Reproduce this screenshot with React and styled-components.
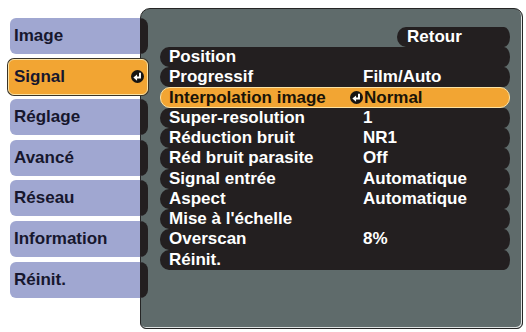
import React from "react";
import styled, { createGlobalStyle } from "styled-components";

const Global = createGlobalStyle`
  html, body { margin: 0; padding: 0; background: #ffffff; }
  body { font-family: "Liberation Sans", Arial, sans-serif; }
`;

const Screen = styled.div`
  width: 526px;
  height: 332px;
  display: flex;
  align-items: flex-start;
  padding-top: 8px;
  box-sizing: border-box;
  overflow: hidden;
`;

const Sidebar = styled.nav`
  position: relative;
  z-index: 1;
  margin-left: 10px;
  margin-right: -8px;
  margin-top: 10px;
  width: 138px;
  display: flex;
  flex-direction: column;
  gap: 4.6px;
`;

const Tab = styled.div`
  height: 36px;
  box-sizing: border-box;
  display: flex;
  align-items: center;
  justify-content: space-between;
  padding-left: 4px;
  font-size: 17px;
  font-weight: bold;
  color: #17172e;
  background: ${(p) => (p.$active ? "#f2a533" : "#a0a7d1")};
  border-radius: ${(p) => (p.$active ? "6px" : "6px 8px 8px 6px")};
  border-right: ${(p) => (p.$active ? "1px solid #fbe2a4" : "8px solid #231f20")};
  ${(p) =>
    p.$active &&
    `
    margin-left: -2px;
    border: 1px solid #fbe2a4;
    box-shadow: 0 0 0 1px #3a3428;
    padding-left: 5px;
    padding-right: 3px;
  `}
`;

const Panel = styled.section`
  width: 383px;
  height: 321px;
  box-sizing: border-box;
  background: #5f6b6b;
  border: 1px solid #262626;
  border-radius: 10px 9px 6px 6px;
  box-shadow: inset -1px -1px 0 #dfe3e3;
  padding: 17.7px 12px 0 19px;
  display: flex;
  flex-direction: column;
`;

const Row = styled.div`
  height: 20.27px;
  box-sizing: border-box;
  display: grid;
  grid-template-columns: 194px 1fr;
  align-items: center;
  padding-left: 9px;
  font-size: 17px;
  line-height: 18px;
  font-weight: bold;
  white-space: nowrap;
  color: ${(p) => (p.$active ? "#1a1408" : "#ffffff")};
  background: ${(p) => (p.$active ? "#f2a533" : "#231f20")};
  border-radius: ${(p) => (p.$active ? "10px" : "9px 6px 6px 9px / 10px")};
  ${(p) => p.$active && `border: 1px solid #fbe2a4; padding-left: 8px;`}
`;

const BackRow = styled(Row)`
  align-self: flex-end;
  width: 113px;
  grid-template-columns: 1fr;
  padding-left: 10px;
`;

const Value = styled.span`
  display: flex;
  align-items: center;
`;

const IconSlot = styled.span`
  display: inline-flex;
  margin-left: -13px;
  margin-right: 1px;
`;

const EnterIcon = () => (
  <svg width="13" height="13" viewBox="0 0 12 12">
    <circle cx="6" cy="6" r="6" fill="#161412" />
    <path d="M8.3 2.6 V7 H5" stroke="#ffffff" strokeWidth="1.8" fill="none" />
    <polygon points="5.6,4.1 2.2,7 5.6,9.9" fill="#ffffff" />
  </svg>
);

const tabs = ["Image", "Signal", "Réglage", "Avancé", "Réseau", "Information", "Réinit."];

const rows = [
  ["Position", ""],
  ["Progressif", "Film/Auto"],
  ["Interpolation image", "Normal", true],
  ["Super-resolution", "1"],
  ["Réduction bruit", "NR1"],
  ["Réd bruit parasite", "Off"],
  ["Signal entrée", "Automatique"],
  ["Aspect", "Automatique"],
  ["Mise à l'échelle", ""],
  ["Overscan", "8%"],
  ["Réinit.", ""],
];

export default function App() {
  return (
    <>
      <Global />
      <Screen>
        <Sidebar>
          {tabs.map((t) => (
            <Tab key={t} $active={t === "Signal"}>
              <span>{t}</span>
              {t === "Signal" && <EnterIcon />}
            </Tab>
          ))}
        </Sidebar>
        <Panel>
          <BackRow>
            <span>Retour</span>
          </BackRow>
          {rows.map(([label, value, active]) => (
            <Row key={label} $active={active}>
              <span>{label}</span>
              <Value>
                {active && (
                  <IconSlot>
                    <EnterIcon />
                  </IconSlot>
                )}
                {value}
              </Value>
            </Row>
          ))}
        </Panel>
      </Screen>
    </>
  );
}
